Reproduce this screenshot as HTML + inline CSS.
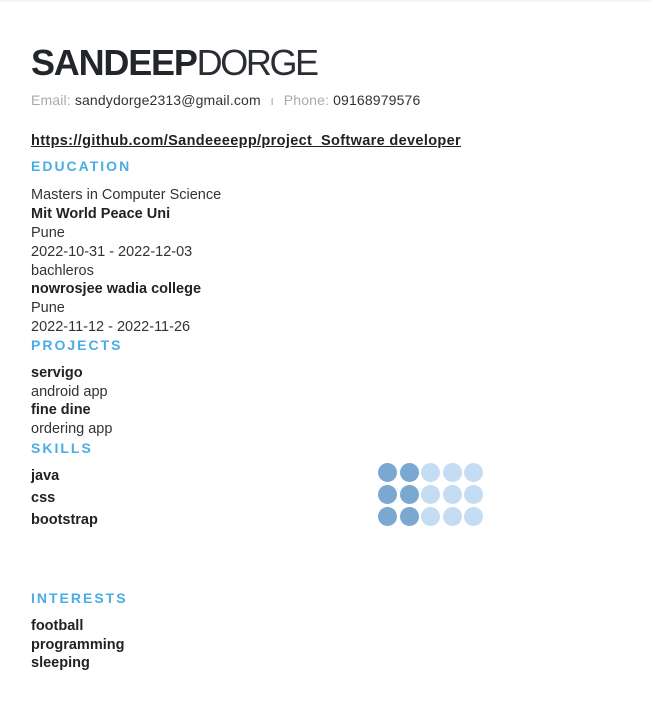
<!DOCTYPE html>
<html><head><meta charset="utf-8"><style>
html,body{margin:0;padding:0;background:#fff;width:651px;height:714px;overflow:hidden;position:relative;font-family:"Liberation Sans",sans-serif;color:#222;}
.top{position:absolute;left:0;top:0;width:651px;height:3px;background:linear-gradient(#f0f0f0,#fff);}
.a{position:absolute;left:31px;white-space:nowrap;line-height:19px;height:19px;font-size:14.5px;}
.b{font-weight:bold;color:#222;}
.r{color:#333;}
.h{font-weight:bold;color:#4aade6;letter-spacing:2px;font-size:14px;}
.dots{position:absolute;left:378px;}
.d{position:absolute;width:19px;height:19px;border-radius:50%;}
.f{background:#7aa8d0;}.e{background:#c4ddf2;}
</style></head><body>
<div class="top"></div>
<div class="a" style="top:41px;height:44px;line-height:44px;font-size:36px;letter-spacing:-1.2px;color:#22252a"><b>SANDEEP</b><span style="font-weight:300;color:#2a2d33;letter-spacing:-2.4px">DORGE</span></div>
<div class="a" style="top:91px;color:#333;font-size:14px;letter-spacing:0.15px"><span style="color:#aaa">Email:</span> sandydorge2313@gmail.com <span style="color:#999;font-size:10px;margin:0 6px">I</span> <span style="color:#aaa">Phone:</span> 09168979576</div>
<div class="a b" style="top:132px;text-decoration:underline;letter-spacing:0.35px">https://github.com/Sandeeeepp/project&nbsp;&nbsp;Software developer</div>
<div class="a h" style="top:157px">EDUCATION</div>
<div class="a r" style="top:186px">Masters in Computer Science</div>
<div class="a b" style="top:205px">Mit World Peace Uni</div>
<div class="a r" style="top:224px">Pune</div>
<div class="a r" style="top:243px">2022-10-31 - 2022-12-03</div>
<div class="a r" style="top:262px">bachleros</div>
<div class="a b" style="top:280px">nowrosjee wadia college</div>
<div class="a r" style="top:299px">Pune</div>
<div class="a r" style="top:318px">2022-11-12 - 2022-11-26</div>
<div class="a h" style="top:336px">PROJECTS</div>
<div class="a b" style="top:364px">servigo</div>
<div class="a r" style="top:383px">android app</div>
<div class="a b" style="top:401px">fine dine</div>
<div class="a r" style="top:420px">ordering app</div>
<div class="a h" style="top:439px">SKILLS</div>
<div class="a b" style="top:467px">java</div>
<div class="a b" style="top:489px">css</div>
<div class="a b" style="top:511px">bootstrap</div>
<div class="dots" style="top:463px">
<div class="d f" style="left:0;top:0"></div><div class="d f" style="left:21.5px;top:0"></div><div class="d e" style="left:43px;top:0"></div><div class="d e" style="left:64.5px;top:0"></div><div class="d e" style="left:86px;top:0"></div>
<div class="d f" style="left:0;top:22px"></div><div class="d f" style="left:21.5px;top:22px"></div><div class="d e" style="left:43px;top:22px"></div><div class="d e" style="left:64.5px;top:22px"></div><div class="d e" style="left:86px;top:22px"></div>
<div class="d f" style="left:0;top:44px"></div><div class="d f" style="left:21.5px;top:44px"></div><div class="d e" style="left:43px;top:44px"></div><div class="d e" style="left:64.5px;top:44px"></div><div class="d e" style="left:86px;top:44px"></div>
</div>
<div class="a h" style="top:589px">INTERESTS</div>
<div class="a b" style="top:617px">football</div>
<div class="a b" style="top:636px">programming</div>
<div class="a b" style="top:654px">sleeping</div>
</body></html>
